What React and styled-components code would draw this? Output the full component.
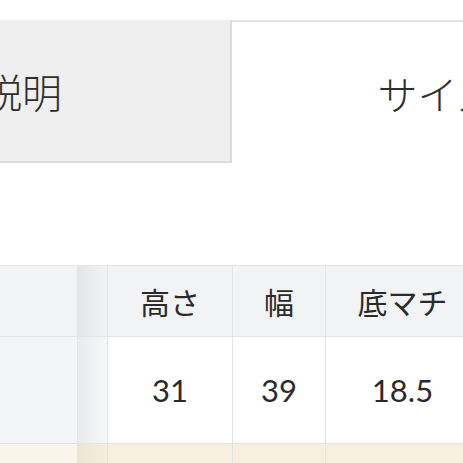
import React from "react";
import styled, { createGlobalStyle } from "styled-components";

const Global = createGlobalStyle`
  html, body { margin: 0; padding: 0; background: #fff; }
  body { overflow: hidden; font-family: "Lato", "Noto Sans CJK JP", sans-serif; color: #2e2e2e; }
`;

const Page = styled.div`
  width: 463px;
  height: 463px;
  overflow: hidden;
  background: #fff;
`;

const TabBar = styled.div`
  display: flex;
  padding-top: 20px;
  margin-left: -266px;
`;

const Tab = styled.div`
  flex: 0 0 ${(p) => p.$width}px;
  box-sizing: border-box;
  height: 143px;
  display: flex;
  align-items: center;
  justify-content: center;
  font-family: "Noto Sans CJK JP", sans-serif;
  font-size: 40px;
  font-weight: 300;
  color: #2e2e2e;
  background: ${(p) => (p.$active ? "#ffffff" : "#efefef")};
  border-right: ${(p) => (p.$active ? "none" : "2px solid #dcdcdc")};
  border-bottom: ${(p) => (p.$active ? "none" : "2px solid #dcdcdc")};
  border-top: ${(p) => (p.$active ? "2px solid #e2e2e2" : "none")};
`;

const Table = styled.div`
  margin-top: 102px;
  display: grid;
  grid-template-columns: 78px 30px 125px 93px 154px;
  grid-template-rows: 71px 107px 40px;
  border-top: 1px solid #e4e6e8;
  width: 480px;
`;

const Cell = styled.div`
  box-sizing: border-box;
  display: flex;
  align-items: center;
  justify-content: center;
  border-right: 1px solid #e2e4e6;
  border-bottom: 1px solid #e2e4e6;
  background: ${(p) => p.$bg};
  font-family: ${(p) => (p.$num ? `"Lato", sans-serif` : `"Noto Sans CJK JP", sans-serif`)};
  font-size: ${(p) => (p.$num ? "31px" : "30px")};
  color: #2a2a2a;
`;

const headerBg = "#f1f3f5";
const shadowBg = "linear-gradient(to right, #e4e6e8, #f0f2f4)";
const beige = "#f7efdf";

export default function App() {
  return (
    <Page>
      <Global />
      <TabBar>
        <Tab $width={498}>商品説明</Tab>
        <Tab $width={410} $active>
          サイズ
        </Tab>
      </TabBar>
      <Table>
        <Cell $bg="#f2f4f6" />
        <Cell $bg={shadowBg} />
        <Cell $bg={headerBg}>高さ</Cell>
        <Cell $bg={headerBg}>幅</Cell>
        <Cell $bg={headerBg}>底マチ</Cell>

        <Cell $bg="#f3f5f7" />
        <Cell $bg="linear-gradient(to right, #e8eaec, #f7f8f9)" />
        <Cell $bg="#ffffff" $num>31</Cell>
        <Cell $bg="#ffffff" $num>39</Cell>
        <Cell $bg="#ffffff" $num>18.5</Cell>

        <Cell $bg="#faf5ea" />
        <Cell $bg="linear-gradient(to right, #ece4d4, #f5eddd)" />
        <Cell $bg={beige} />
        <Cell $bg={beige} />
        <Cell $bg={beige} />
      </Table>
    </Page>
  );
}
